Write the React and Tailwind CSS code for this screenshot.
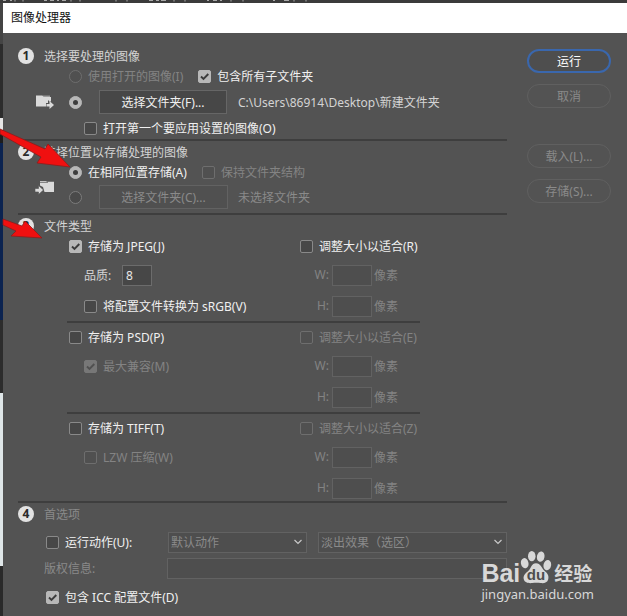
import React from "react";

function Check({ id, label, checked = false, disabled = false }) {
  const box = checked
    ? disabled
      ? "bg-[#777777] border-[#777777]"
      : "bg-[#b8b8b8] border-[#b8b8b8]"
    : disabled
      ? "bg-[#505050] border-[#6e6e6e]"
      : "bg-[#474747] border-[#898989]";
  return (
    <span className="flex items-center gap-1.5">
      <span className="grid size-[13px] shrink-0">
        <input
          id={id}
          type="checkbox"
          defaultChecked={checked}
          disabled={disabled}
          className={`col-start-1 row-start-1 size-[13px] appearance-none rounded-xs border ${box}`}
        />
        {checked && (
          <svg viewBox="0 0 13 13" className="pointer-events-none col-start-1 row-start-1 size-[13px]" fill="none">
            <path d="M3 6.5 5.5 9 10.3 4" stroke={disabled ? "#505050" : "#3c3c3c"} strokeWidth="1.9" />
          </svg>
        )}
      </span>
      <label htmlFor={id} className={`pt-px whitespace-nowrap ${disabled ? "text-[#838383]" : "text-[#f0f0f0]"}`}>
        {label}
      </label>
    </span>
  );
}

function Radio({ id, name, label, checked = false, disabled = false, aria }) {
  return (
    <span className="flex items-center gap-1.5">
      <span className="grid size-[13px] shrink-0">
        <input
          id={id}
          name={name}
          type="radio"
          aria-label={aria}
          defaultChecked={checked}
          disabled={disabled}
          className={`col-start-1 row-start-1 size-[13px] appearance-none rounded-full border ${
            checked ? "border-[#b8b8b8] bg-[#b8b8b8]" : disabled ? "border-[#6e6e6e] bg-[#505050]" : "border-[#7c7c7c] bg-[#4a4a4a]"
          }`}
        />
        {checked && (
          <span className="pointer-events-none col-start-1 row-start-1 size-[5px] place-self-center rounded-full bg-[#3c3c3c]" />
        )}
      </span>
      {label && (
        <label htmlFor={id} className={`pt-px whitespace-nowrap ${disabled ? "text-[#838383]" : "text-[#f0f0f0]"}`}>
          {label}
        </label>
      )}
    </span>
  );
}

function Heading({ n, children, dim = false }) {
  return (
    <div className="flex h-[22px] items-center gap-2.5">
      <span className="flex size-4 items-center justify-center rounded-full bg-[#e2e2e2] text-[12px] font-bold leading-none text-[#2a2a2a]">
        {n}
      </span>
      <h2 className={`pt-0.5 ${dim ? "text-[#8a8a8a]" : "text-[#d4d4d4]"}`}>{children}</h2>
    </div>
  );
}

function SizeField({ id, label }) {
  return (
    <>
      <label htmlFor={id} className="w-[29px] text-right text-[#838383]">
        {label}
      </label>
      <input id={id} disabled className="mr-0.5 ml-[3px] h-[21px] w-10 border border-[#626262] bg-[#4e4e4e]" />
      <span className="pt-0.5 text-[#838383]">像素</span>
    </>
  );
}

function FormatGroup({ id, main, resize, resizeDisabled, first, second, className = "" }) {
  return (
    <div className={`ml-[49px] grid w-[353px] grid-cols-[233px_1fr] ${className}`}>
      <div className="pl-0.5">
        <div className="flex h-[18px] items-center">{main}</div>
        <div className="flex h-10 items-center pl-[15px]">{first}</div>
        <div className="flex h-[22px] items-center pl-[15px]">{second}</div>
      </div>
      <div>
        <div className="flex h-[18px] items-center">
          <Check id={`${id}-resize`} label={resize} disabled={resizeDisabled} />
        </div>
        <div className="flex h-10 items-center">
          <SizeField id={`${id}-w`} label="W:" />
        </div>
        <div className="flex h-[22px] items-center">
          <SizeField id={`${id}-h`} label="H:" />
        </div>
      </div>
    </div>
  );
}

function Select({ label, value, className }) {
  return (
    <span className={`grid ${className}`}>
      <select
        aria-label={label}
        disabled
        className="col-start-1 row-start-1 h-[21px] w-full appearance-none border border-[#626262] bg-[#4e4e4e] pt-0.5 pl-0.5 text-[#8a8a8a] opacity-100"
      >
        <option>{value}</option>
      </select>
      <svg viewBox="0 0 10 6" className="pointer-events-none col-start-1 row-start-1 mr-1 h-1.5 w-2.5 place-self-center justify-self-end" fill="none">
        <path d="M1.5 1 5 4.5 8.5 1" stroke="#c9c9c9" strokeWidth="1.2" />
      </svg>
    </span>
  );
}

function SourceIcon() {
  return (
    <svg viewBox="0 0 20 16" className="h-4 w-5" fill="#dadada">
      <path d="M2 1.500h6.500l1 1.500H17v4.500h-1.500L14 6v3h-2v3.500H2z" />
      <path d="M9 2.200h7" stroke="#dadada" strokeWidth=".8" />
      <path d="M12.500 10h3V7L20 11l-4.500 4v-2.500h-3z" />
    </svg>
  );
}

function TargetIcon() {
  return (
    <svg viewBox="0 0 20 16" className="h-4 w-5" fill="#dadada">
      <path d="M6 0h6l1 .8h7V11h-9.500L9 6 6 4.500z" />
      <path d="M6 1.300h8" stroke="#535353" strokeWidth=".8" />
      <path d="M1 7.500h3.500V4.500L9.500 9l-5 4.500V11H1z" stroke="#535353" strokeWidth=".6" />
    </svg>
  );
}

function PillButton({ children, primary = false }) {
  return (
    <button
      type="button"
      disabled={!primary}
      className={`h-6 w-full rounded-full pt-px ${
        primary ? "border-2 border-[#3a67ad] bg-[#4e4e4e] text-white" : "border border-[#606060] text-[#8a8a8a]"
      }`}
    >
      {children}
    </button>
  );
}

function Watermark() {
  return (
    <div className="absolute right-[33px] bottom-[13px] text-[#d8d8d8]">
      <div className="flex h-[36px] items-end">
        <span className="font-['Liberation_Sans',sans-serif] text-[25px] leading-[24px] font-bold">Bai</span>
        <svg viewBox="0 0 34 36" className="h-9 w-8" fill="#d8d8d8">
          <ellipse cx="5" cy="14" rx="4" ry="5.500" transform="rotate(-12 5 14)" />
          <ellipse cx="12.500" cy="6.500" rx="4" ry="5.500" />
          <ellipse cx="22" cy="7" rx="4" ry="5.500" transform="rotate(12 22 7)" />
          <ellipse cx="29" cy="16" rx="4" ry="5.500" transform="rotate(12 29 16)" />
          <path d="M17 14c5 0 6 5 9 8 3 2.500 5 5 4 9-1 4-5 4.500-8 4-3-.5-6-.5-9 0s-8 0-9-4c-1-4 2-6.500 5-9 3-3 3-8 8-8z" />
          <text x="17" y="32" textAnchor="middle" fill="#4e4e4e" fontFamily="Liberation Sans" fontWeight="bold" fontSize="16">
            du
          </text>
        </svg>
        <span className="ml-0.5 text-[19px] leading-[22px] font-bold">经验</span>
      </div>
      <div className="text-[13px] leading-[18px]">jingyan.baidu.com</div>
    </div>
  );
}

export default function App() {
  return (
    <div className="relative flex min-h-screen flex-col overflow-hidden bg-[#3b3b3b] font-['Noto_Sans','Noto_Sans_CJK_SC',sans-serif] text-[12px] leading-4">
      <svg className="h-[3px] w-full shrink-0" fill="none" stroke="#a8a8a8" strokeWidth="1">
        <path
          d="M3 .5h3M10 .5h2M15 0v1.500M23 0v1.500M44 .5h3M50 .5h4M57 .5h2M62 .5h4M71 0v1.500M80 0v1.500M116 0v1.500M127 0v1.500M149 .5h4M156 .5h3M161 .5h5M174 0v1.500M185 0v1.500M207 .5h2M213 .5h4M220 .5h2M231 0v1.500M243 0v1.500M273 .5h2M284 .5h5M294 0v1.500M306 0v1.500"
        />
      </svg>
      <div className="flex grow">
        <div className="flex w-[3px] shrink-0 flex-col">
          <div className="h-[41px] bg-[#444444]" />
          <div className="h-[74px] bg-[#2c2c2c]" />
          <div className="h-3 bg-[#e6e6e6]" />
          <div className="h-[13px] bg-[#1d1d1d]" />
          <div className="h-[177px] bg-[#0b2350]" />
          <div className="h-[73px] bg-[#2c2c2c]" />
          <div className="h-[173px] bg-[#dfe6e8]" />
          <div className="grow bg-[#2a2a2a]" />
        </div>
        <div className="flex min-w-0 grow flex-col bg-[#535353]">
          <header className="flex h-[30px] items-center bg-white px-2 text-[#111111]">
            <h1>图像处理器</h1>
          </header>
          <main className="flex grow justify-between pr-4 pl-[15px]">
            <form className="w-[489px]">
              <section className="border-b-2 border-[#3e3e3e] pt-3 pb-0.5">
                <Heading n="1">选择要处理的图像</Heading>
                <div className="flex h-[18px] items-center gap-[15px] pl-[51px]">
                  <Radio id="open" name="source" label="使用打开的图像(I)" disabled />
                  <Check id="subfolders" label="包含所有子文件夹" checked />
                </div>
                <div className="flex h-[34px] items-center pl-4">
                  <SourceIcon />
                  <span className="ml-[15px]">
                    <Radio id="folder" name="source" aria="选择文件夹" checked />
                  </span>
                  <button type="button" className="ml-[17px] h-6 w-32 border border-[#666666] bg-[#474747] pt-px text-[#f0f0f0]">
                    选择文件夹(F)...
                  </button>
                  <span className="ml-[11px] pt-px text-[#d4d4d4]">C:\Users\86914\Desktop\新建文件夹</span>
                </div>
                <div className="flex h-[18px] items-center pl-[66px]">
                  <Check id="openfirst" label="打开第一个要应用设置的图像(O)" />
                </div>
              </section>

              <section className="border-b-2 border-[#3e3e3e]">
                <Heading n="2">选择位置以存储处理的图像</Heading>
                <div className="flex h-[18px] items-center gap-[15px] pl-[51px]">
                  <Radio id="same" name="target" label="在相同位置存储(A)" checked />
                  <Check id="keep" label="保持文件夹结构" disabled />
                </div>
                <div className="flex h-8 items-center pl-4">
                  <span className="self-start">
                    <TargetIcon />
                  </span>
                  <span className="ml-[15px]">
                    <Radio id="other" name="target" aria="选择其他文件夹" />
                  </span>
                  <button type="button" disabled className="ml-[17px] h-6 w-[129px] border border-[#626262] bg-[#505050] pt-0.5 text-[#8a8a8a]">
                    选择文件夹(C)...
                  </button>
                  <span className="ml-2.5 pt-0.5 text-[#8a8a8a]">未选择文件夹</span>
                </div>
              </section>

              <section className="border-b-2 border-[#3e3e3e] pb-0.5">
                <Heading n="3">文件类型</Heading>
                <FormatGroup
                  id="jpeg"
                  className="border-b-2 border-[#3e3e3e] pb-1"
                  main={<Check id="jpeg" label="存储为 JPEG(J)" checked />}
                  resize="调整大小以适合(R)"
                  first={
                    <>
                      <label htmlFor="quality" className="w-[38px] pt-px text-[#d4d4d4]">
                        品质:
                      </label>
                      <input
                        id="quality"
                        defaultValue="8"
                        className="h-[21px] w-[30px] border border-[#6c6c6c] bg-[#474747] pl-[3px] text-[#e8e8e8]"
                      />
                    </>
                  }
                  second={<Check id="srgb" label="将配置文件转换为 sRGB(V)" />}
                />
                <FormatGroup
                  id="psd"
                  className="border-b-2 border-[#3e3e3e] pt-[5px] pb-1"
                  main={<Check id="psd" label="存储为 PSD(P)" />}
                  resize="调整大小以适合(E)"
                  resizeDisabled
                  first={<Check id="compat" label="最大兼容(M)" checked disabled />}
                />
                <FormatGroup
                  id="tiff"
                  className="pt-[5px]"
                  main={<Check id="tiff" label="存储为 TIFF(T)" />}
                  resize="调整大小以适合(Z)"
                  resizeDisabled
                  first={<Check id="lzw" label="LZW 压缩(W)" disabled />}
                />
              </section>

              <section>
                <Heading n="4" dim>
                  首选项
                </Heading>
                <div className="flex h-[34px] items-center pl-7">
                  <span className="w-[122px]">
                    <Check id="action" label="运行动作(U):" />
                  </span>
                  <Select label="动作组" value="默认动作" className="w-[139px]" />
                  <Select label="动作" value="淡出效果（选区）" className="ml-[11px] w-[189px]" />
                </div>
                <div className="-mt-0.5 flex h-[22px] items-center pl-[26px]">
                  <label htmlFor="copyright" className="w-[123px] pt-0.5 text-[#8a8a8a]">
                    版权信息:
                  </label>
                  <input id="copyright" disabled className="h-[21px] w-[340px] border border-[#626262] bg-[#4e4e4e]" />
                </div>
                <div className="flex h-9 items-center pl-7">
                  <Check id="icc" label="包含 ICC 配置文件(D)" checked />
                </div>
              </section>
            </form>

            <aside className="flex w-[84px] flex-col pt-4">
              <PillButton primary>运行</PillButton>
              <div className="mt-[11px]">
                <PillButton>取消</PillButton>
              </div>
              <div className="mt-9">
                <PillButton>载入(L)...</PillButton>
              </div>
              <div className="mt-[11px]">
                <PillButton>存储(S)...</PillButton>
              </div>
            </aside>
          </main>
        </div>
      </div>

      <svg viewBox="0 0 90 130" className="pointer-events-none absolute top-[120px] left-0 h-[130px] w-[90px]">
        <path d="M0 9 L45 29 L48 24 L70 47 L37 43 L41 37 L0 14z" fill="#f01010" stroke="#8e1c1c" strokeWidth=".8" />
        <path d="M3 99 L22 106 L25 101 L42 118 L11 116 L16 111 L3 105z" fill="#f01010" stroke="#8e1c1c" strokeWidth=".8" />
      </svg>
      <Watermark />
    </div>
  );
}
